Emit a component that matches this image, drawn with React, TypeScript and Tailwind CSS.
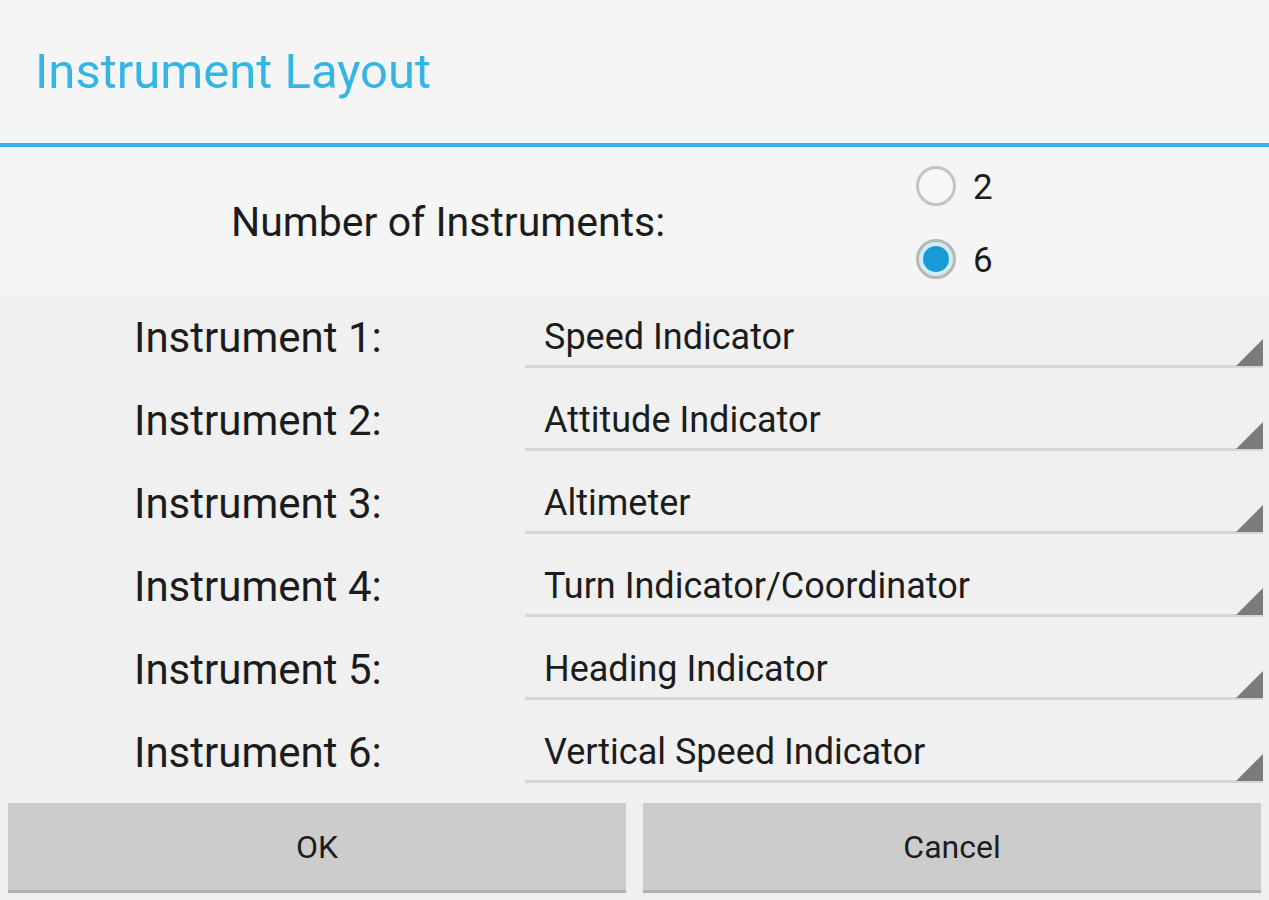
import React from "react";

const rows = [
  ["Instrument 1:", "Speed Indicator"],
  ["Instrument 2:", "Attitude Indicator"],
  ["Instrument 3:", "Altimeter"],
  ["Instrument 4:", "Turn Indicator/Coordinator"],
  ["Instrument 5:", "Heading Indicator"],
  ["Instrument 6:", "Vertical Speed Indicator"],
];

function Radio({ checked, label }: { checked: boolean; label: string }) {
  return (
    <div className="flex items-center h-[73px]">
      <div
        className={
          checked
            ? "w-[40px] h-[40px] rounded-full border-[3px] border-[#b8b8b8] bg-[#cdeef9] flex items-center justify-center"
            : "w-[40px] h-[40px] rounded-full border-[3px] border-[#c4c4c4] bg-[#f7f7f7]"
        }
      >
        {checked && <div className="w-[26px] h-[26px] rounded-full bg-[#1a9bd7]" />}
      </div>
      <span className="ml-[17px] text-[35px] text-[#1c1c1c] leading-none pt-[2px]">{label}</span>
    </div>
  );
}

export default function App() {
  return (
    <div
      className="w-[1269px] h-[900px] bg-[#f0f0f0] flex flex-col overflow-hidden"
      style={{ fontFamily: "Roboto, 'Noto Sans', sans-serif" }}
    >
      <div className="h-[143px] bg-[#f5f5f5] flex items-center pl-[35px]">
        <span className="text-[49px] text-[#33b5e5] leading-none">Instrument Layout</span>
      </div>
      <div className="h-[4px] bg-[#33b5e5]" />
      <div className="h-[148px] bg-[#f5f5f5] flex items-center">
        <div className="pl-[231px] w-[916px] pt-[2px]">
          <span className="text-[41px] text-[#1c1c1c] leading-none">Number of Instruments:</span>
        </div>
        <div className="flex flex-col pt-[3px]">
          <Radio checked={false} label="2" />
          <Radio checked={true} label="6" />
        </div>
      </div>
      <div className="flex flex-col pt-[1px]">
        {rows.map(([l, v]) => (
          <div key={l} className="h-[83px] flex">
            <div className="w-[525px] pl-[134px] flex items-center">
              <span className="text-[42px] text-[#1c1c1c] leading-none">{l}</span>
            </div>
            <div className="relative w-[738px] h-[72px] border-b-[3px] border-[#d6d6d6] flex items-center pl-[19px] pt-[12px]">
              <span className="text-[36px] text-[#1c1c1c] leading-none">{v}</span>
              <svg className="absolute right-0 bottom-[-1px]" width="27" height="27" viewBox="0 0 27 27">
                <polygon points="27,0 27,27 0,27" fill="#7b7b7b" />
              </svg>
            </div>
          </div>
        ))}
      </div>
      <div className="flex gap-[17px] px-[8px] pt-[9px]">
        <button className="flex-1 h-[90px] bg-[#cccccc] border-b-[3px] border-[#b0b0b0] flex items-center justify-center text-[32px] text-[#1c1c1c]">
          OK
        </button>
        <button className="flex-1 h-[90px] bg-[#cccccc] border-b-[3px] border-[#b0b0b0] flex items-center justify-center text-[32px] text-[#1c1c1c]">
          Cancel
        </button>
      </div>
    </div>
  );
}
